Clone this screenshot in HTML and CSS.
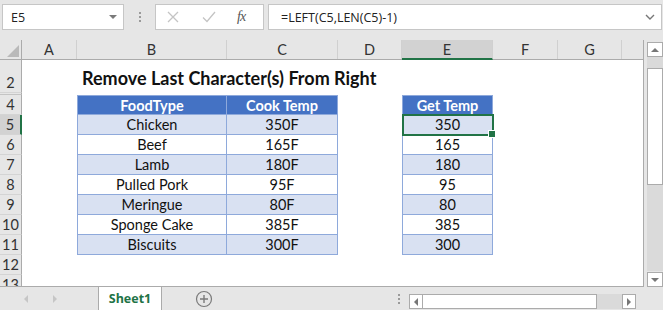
FILE: index.html
```html
<!DOCTYPE html>
<html lang="en">
<head>
  <meta charset="UTF-8">
  <title>Remove Last Character(s) From Right</title>
  <link rel="stylesheet" href="styles.css">
</head>
<body>
  <div class="app">
    <!-- Formula bar -->
    <div class="formula-bar">
      <div class="name-box">
        <span>E5</span>
        <svg class="drop" viewBox="0 0 8 4"><path d="M0 0h8L4 4z" fill="#7a7a7a"/></svg>
      </div>
      <div class="grip"><i></i><i></i><i></i></div>
      <div class="fx-buttons">
        <svg class="fx-icon" viewBox="0 0 12 12"><path d="M1 1l10 10M11 1L1 11" stroke="#c4c4c4" stroke-width="1.3" fill="none"/></svg>
        <svg class="fx-icon" viewBox="0 0 14 12"><path d="M1 6.5l4 4L13 1" stroke="#c4c4c4" stroke-width="1.3" fill="none"/></svg>
        <span class="fx">fx</span>
      </div>
      <div class="formula">
        <span>=LEFT(C5,LEN(C5)-1)</span>
        <svg class="chev" viewBox="0 0 10 6"><path d="M1 1l4 4 4-4" stroke="#777" stroke-width="1.4" fill="none"/></svg>
      </div>
    </div>

    <div class="main">
      <!-- Sheet grid -->
      <div class="sheet">
        <div class="row r-head">
          <div class="corner"><svg viewBox="0 0 12 12"><path d="M12 0v12H0z" fill="#b9b9b9"/></svg></div>
          <div class="ch">A</div>
          <div class="ch">B</div>
          <div class="ch">C</div>
          <div class="ch">D</div>
          <div class="ch sel">E</div>
          <div class="ch">F</div>
          <div class="ch">G</div>
          <div class="ch last"></div>
        </div>

        <div class="row r-title">
          <div class="rh">2</div>
          <div class="col-b title">Remove Last Character(s) From Right</div>
        </div>

        <div class="row r-hidden"><div class="rh"></div></div>

        <div class="row">
          <div class="rh">4</div>
          <div class="col-b cell th first">FoodType</div>
          <div class="col-c cell th">Cook Temp</div>
          <div class="col-e cell th first">Get Temp</div>
        </div>
        <div class="row">
          <div class="rh sel">5</div>
          <div class="col-b cell band first">Chicken</div>
          <div class="col-c cell band">350F</div>
          <div class="col-e cell band first active">350</div>
        </div>
        <div class="row">
          <div class="rh">6</div>
          <div class="col-b cell first">Beef</div>
          <div class="col-c cell">165F</div>
          <div class="col-e cell first">165</div>
        </div>
        <div class="row">
          <div class="rh">7</div>
          <div class="col-b cell band first">Lamb</div>
          <div class="col-c cell band">180F</div>
          <div class="col-e cell band first">180</div>
        </div>
        <div class="row">
          <div class="rh">8</div>
          <div class="col-b cell first">Pulled Pork</div>
          <div class="col-c cell">95F</div>
          <div class="col-e cell first">95</div>
        </div>
        <div class="row">
          <div class="rh">9</div>
          <div class="col-b cell band first">Meringue</div>
          <div class="col-c cell band">80F</div>
          <div class="col-e cell band first">80</div>
        </div>
        <div class="row">
          <div class="rh">10</div>
          <div class="col-b cell first">Sponge Cake</div>
          <div class="col-c cell">385F</div>
          <div class="col-e cell first">385</div>
        </div>
        <div class="row">
          <div class="rh">11</div>
          <div class="col-b cell band first">Biscuits</div>
          <div class="col-c cell band">300F</div>
          <div class="col-e cell band first">300</div>
        </div>
        <div class="row">
          <div class="rh">12</div>
        </div>
        <div class="row r-cut">
          <div class="rh">13</div>
        </div>
      </div>

      <!-- Vertical scrollbar -->
      <div class="vscroll">
        <div class="sbtn"><svg viewBox="0 0 8 4"><path d="M0 4h8L4 0z" fill="#777"/></svg></div>
        <div class="vtrack"><div class="vthumb"></div></div>
        <div class="sbtn"><svg viewBox="0 0 8 4"><path d="M0 0h8L4 4z" fill="#777"/></svg></div>
      </div>
    </div>

    <!-- Sheet tabs and horizontal scrollbar -->
    <div class="tabs">
      <div class="nav">
        <svg viewBox="0 0 4 8"><path d="M4 0v8L0 4z" fill="#c6c6c6"/></svg>
        <svg viewBox="0 0 4 8"><path d="M0 0v8l4-4z" fill="#c6c6c6"/></svg>
      </div>
      <div class="tab">Sheet1</div>
      <svg class="add" viewBox="0 0 18 18">
        <circle cx="9" cy="9" r="7.5" stroke="#7a7a7a" stroke-width="1.2" fill="none"/>
        <path d="M9 5v8M5 9h8" stroke="#7a7a7a" stroke-width="1.4"/>
      </svg>
      <div class="grip tab-grip"><i></i><i></i><i></i></div>
      <div class="hscroll">
        <div class="hbtn"><svg viewBox="0 0 4 8"><path d="M4 0v8L0 4z" fill="#777"/></svg></div>
        <div class="hthumb"></div>
        <div class="htrack"></div>
        <div class="hbtn"><svg viewBox="0 0 4 8"><path d="M0 0v8l4-4z" fill="#777"/></svg></div>
      </div>
    </div>
  </div>
</body>
</html>
```

FILE: styles.css
```css
/* Basic Reset */
* {
  margin: 0;
  padding: 0;
  box-sizing: border-box;
}

body {
  background-color: #e6e6e6;
  font-family: "Open Sans", sans-serif;
  color: #222;
}

.app {
  width: 663px;
  height: 310px;
  overflow: hidden;
  display: flex;
  flex-direction: column;
}

/* Formula bar */
.formula-bar {
  height: 40px;
  display: flex;
  align-items: flex-start;
  padding: 4px 1px 0 2px;
}

.name-box {
  width: 122px;
  height: 26px;
  background: #fff;
  border: 1px solid #c6c6c6;
  display: flex;
  align-items: center;
  justify-content: space-between;
  padding: 0 6px 0 8px;
  font-size: 12.5px;
}

.name-box .drop {
  width: 8px;
  height: 4px;
}

.grip {
  width: 31px;
  height: 26px;
  display: flex;
  flex-direction: column;
  align-items: center;
  justify-content: center;
  gap: 2px;
}

.grip i {
  display: block;
  width: 2px;
  height: 2px;
  background: #9a9a9a;
}

.fx-buttons {
  width: 109px;
  height: 26px;
  background: #fff;
  border: 1px solid #c6c6c6;
  display: flex;
  align-items: center;
  padding-left: 11px;
}

.fx-icon {
  width: 12px;
  height: 12px;
  margin-right: 23px;
}

.fx-icon + .fx-icon {
  width: 14px;
  margin-right: 21px;
}

.fx {
  font-family: "Liberation Serif", serif;
  font-style: italic;
  font-size: 14px;
  color: #555;
  letter-spacing: -1px;
}

.formula {
  flex: 1;
  height: 26px;
  margin-left: 4px;
  background: #fff;
  border: 1px solid #c6c6c6;
  display: flex;
  align-items: center;
  justify-content: space-between;
  padding: 0 6px 0 12px;
  font-size: 12.5px;
}

.chev {
  width: 10px;
  height: 6px;
}

/* Main area */
.main {
  display: flex;
  height: 247px;
}

.sheet {
  width: 644px;
  background: #fff;
  border-right: 1px solid #ababab;
  border-bottom: 1px solid #ababab;
  font-family: Lato, sans-serif;
  font-size: 14.5px;
}

.row {
  display: grid;
  grid-template-columns: 22px 55px 150px 111px 64px 91px 65px 64px 1fr;
  height: 20px;
}

.r-head {
  background: #e6e6e6;
  border-bottom: 1px solid #ababab;
}

.r-title {
  height: 33px;
}

.r-hidden {
  height: 2px;
}

.r-cut {
  height: 11px;
  overflow: hidden;
}

.corner {
  border-right: 1px solid #ababab;
  display: flex;
  align-items: flex-end;
  justify-content: flex-end;
  padding: 0 2px 2px 0;
}

.corner svg {
  width: 12px;
  height: 12px;
}

.ch {
  border-right: 1px solid #d0d0d0;
  display: flex;
  align-items: center;
  justify-content: center;
  color: #333;
}

.ch.last {
  border-right: none;
}

.ch.sel {
  background: #d2d2d2;
  border-bottom: 2px solid #217346;
  margin-bottom: -1px;
}

.rh {
  grid-column: 1;
  background: #e6e6e6;
  border-right: 1px solid #ababab;
  border-bottom: 1px solid #d4d4d4;
  display: flex;
  align-items: flex-end;
  justify-content: center;
  color: #333;
  line-height: 19px;
}

.rh.sel {
  background: #d2d2d2;
  border-right: 2px solid #217346;
}

.r-hidden .rh {
  border-bottom: 1px solid #c4c4c4;
}

.col-b {
  grid-column: 3;
}

.col-c {
  grid-column: 4;
}

.col-e {
  grid-column: 6;
}

/* Title */
.title {
  white-space: nowrap;
  font-weight: bold;
  font-size: 18px;
  color: #111;
  padding: 7px 0 0 5px;
}

/* Table cells */
.cell {
  display: flex;
  align-items: center;
  justify-content: center;
  border-right: 1px solid #8ea9db;
  border-bottom: 1px solid #8ea9db;
  color: #111;
  background: #fff;
}

.cell.first {
  border-left: 1px solid #8ea9db;
}

.cell.th {
  background: #4472c4;
  color: #fff;
  font-weight: bold;
  border-top: 1px solid #8ea9db;
}

.cell.band {
  background: #d9e1f2;
}

/* Active cell selection */
.cell.active {
  position: relative;
}

.cell.active::before {
  content: "";
  position: absolute;
  left: -1px;
  top: -1px;
  right: -2px;
  bottom: -2px;
  border: 2px solid #217346;
}

.cell.active::after {
  content: "";
  position: absolute;
  right: -4px;
  bottom: -4px;
  width: 6px;
  height: 6px;
  background: #217346;
  border: 1px solid #fff;
}

/* Vertical scrollbar */
.vscroll {
  flex: 1;
  display: flex;
  flex-direction: column;
  align-items: center;
  padding: 2px 0 0 2px;
}

.sbtn {
  width: 16px;
  height: 15px;
  background: #fff;
  border: 1px solid #ababab;
  display: flex;
  align-items: center;
  justify-content: center;
}

.sbtn svg {
  width: 8px;
  height: 4px;
}

.vtrack {
  flex: 1;
  width: 16px;
  background: #dadada;
  padding-top: 11px;
  margin-bottom: 1px;
}

.vthumb {
  height: 117px;
  background: #fff;
  border: 1px solid #ababab;
}

/* Sheet tabs */
.tabs {
  flex: 1;
  display: flex;
  align-items: stretch;
}

.nav {
  width: 98px;
  display: flex;
  align-items: center;
  gap: 25px;
  padding-left: 24px;
}

.nav svg {
  width: 4px;
  height: 8px;
}

.tab {
  width: 64px;
  background: #fff;
  border-left: 1px solid #ababab;
  border-right: 1px solid #ababab;
  color: #217346;
  font-weight: bold;
  font-size: 12.5px;
  display: flex;
  align-items: center;
  justify-content: center;
}

.add {
  width: 18px;
  height: 18px;
  align-self: center;
  margin-left: 33px;
}

.tab-grip {
  width: 20px;
  height: 23px;
  margin-left: 176px;
}

.hscroll {
  width: 227px;
  display: flex;
  align-items: stretch;
  padding: 7px 0 1px;
}

.hbtn {
  width: 14px;
  background: #fff;
  border: 1px solid #ababab;
  display: flex;
  align-items: center;
  justify-content: center;
}

.hbtn svg {
  width: 4px;
  height: 8px;
}

.hthumb {
  width: 174px;
  background: #fff;
  border: 1px solid #ababab;
  border-left: none;
}

.htrack {
  flex: 1;
  background: #dadada;
}
```
